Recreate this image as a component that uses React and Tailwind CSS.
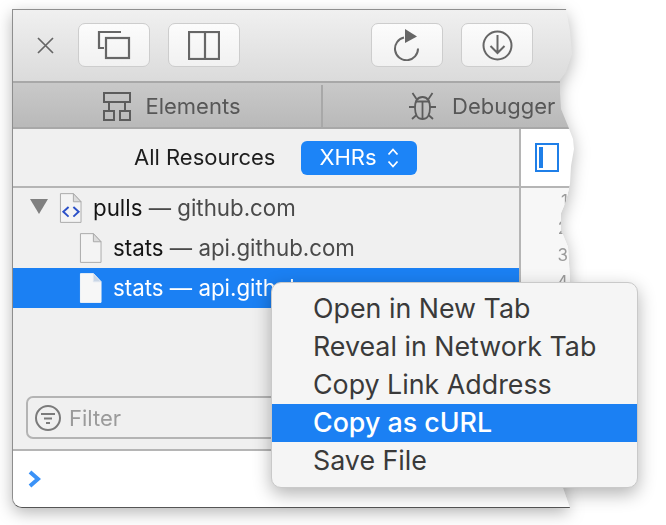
import React from "react";

const sans = "font-['Inter','Liberation_Sans',sans-serif]";

function ToolButton({ children, className = "" }) {
  return (
    <div className={`flex h-[44px] w-[72px] items-center justify-center rounded-[7px] border border-[#cdcdcd] bg-gradient-to-b from-[#fcfcfc] to-[#f1f1f1] ${className}`}>
      {children}
    </div>
  );
}

function FileIcon({ code = false, light = false, className = "" }) {
  return (
    <svg width="23" height="30" viewBox="0 0 24 31" className={className}>
      <path
        d="M1.5 .5H15L23 9V30.5H1.5Z"
        fill={light ? "#f7f7f7" : "#f4f4f4"}
        stroke={light ? "#f7f7f7" : "#a8a8a8"}
      />
      <path d="M15 .5V9H23Z" fill={light ? "#c9d6e6" : "#dcdcdc"} stroke={light ? "#dfe6ef" : "#a8a8a8"} />
      {code && (
        <g fill="none" stroke="#2b50c8" strokeWidth="2">
          <path d="M10 14.5L4.5 19.5L10 24.5" />
          <path d="M15 14.5L20.5 19.5L15 24.5" />
        </g>
      )}
    </svg>
  );
}

function TreeRow({ name, host, indent, selected = false, children }) {
  return (
    <div className={`flex h-10 items-center ${indent} ${selected ? "bg-[#1b80f3] text-white" : "text-[#141414]"}`}>
      {children}
      <span className="ml-[11px] whitespace-nowrap text-[22.3px]">
        {name}{" "}
        <span className={selected ? "text-white" : "text-[#4a4a4a]"}>— {host}</span>
      </span>
    </div>
  );
}

const menuItems = ["Open in New Tab", "Reveal in Network Tab", "Copy Link Address", "Copy as cURL", "Save File"];

export default function App() {
  return (
    <div className={`relative h-[525px] w-[666px] overflow-hidden bg-white pl-3 pt-[9px] ${sans}`}>
      {/* sombra fica fora do clip-path */}
      <div className="w-[563px] drop-shadow-[0_5px_8px_rgba(0,0,0,0.28)]">
        <div className="flex h-[499px] w-[563px] flex-col overflow-hidden rounded-bl-[10px] border-l border-t border-b border-[#8e8e8e] border-b-[#555] [clip-path:polygon(0_0,554px_0,558px_22px,560px_45px,554px_63px,548px_71px,548px_84px,549px_100px,556px_117px,561px_130px,562px_140px,559px_157px,558px_175px,554px_192px,549px_204px,549px_221px,556px_238px,558px_271px,556px_400px,551px_479px,558px_499px,0_499px)]">
          {/* toolbar */}
          <div className="flex h-[73px] shrink-0 items-center border-b-2 border-[#a8a8a8] bg-gradient-to-b from-[#f0f0f0] to-[#dbdbdb] pb-[1px] pl-[24px]">
            <svg width="17" height="17" viewBox="0 0 17 17" fill="none" stroke="#666" strokeWidth="1.7" className="mr-[24px]">
              <path d="M1 1L16 16M16 1L1 16" />
            </svg>
            <ToolButton>
              <svg width="34" height="30" viewBox="0 0 34 30" fill="none" stroke="#666" strokeWidth="2.2">
                <path d="M24 2H2V18H7" />
                <rect x="9" y="8" width="23" height="20" />
              </svg>
            </ToolButton>
            <ToolButton className="ml-[18px]">
              <svg width="32" height="29" viewBox="0 0 32 29" fill="none" stroke="#666" strokeWidth="2.2">
                <rect x="1" y="1" width="30" height="27" />
                <path d="M17 1V28" />
              </svg>
            </ToolButton>
            <ToolButton className="ml-[131px]">
              <svg width="28" height="32" viewBox="0 0 28 32" fill="none" className="-translate-x-[1px]">
                <path d="M12 8.5A11.5 11.5 0 1 0 26 19.5" stroke="#666" strokeWidth="2" />
                <path d="M13 0L25 7.5L13 14Z" fill="#666" />
              </svg>
            </ToolButton>
            <ToolButton className="ml-[18px]">
              <svg width="31" height="31" viewBox="0 0 31 31" fill="none" stroke="#666" strokeWidth="2">
                <circle cx="15.5" cy="15.5" r="14" />
                <path d="M15.5 5V23M8.5 16L15.5 23L22.5 16" />
              </svg>
            </ToolButton>
          </div>

          {/* tabs */}
          <div className="flex h-[46px] shrink-0 border-b-2 border-[#a8a8a8] bg-gradient-to-b from-[#c9c9c9] to-[#b9b9b9] pt-[2px] text-[22px] text-[#575757]">
            <div className="flex w-[310px] items-center justify-center gap-[14px] border-r-2 border-[#a8a8a8] pl-[10px]">
              <svg width="28" height="29" viewBox="0 0 28 29" fill="none" stroke="#5c5c5c" strokeWidth="2">
                <rect x="1" y="1" width="26" height="9" />
                <rect x="1" y="19" width="10" height="9" />
                <rect x="17" y="19" width="10" height="9" />
                <path d="M6 10V19M22 10V19" />
              </svg>
              <span>Elements</span>
            </div>
            <div className="flex items-center gap-[15px] pl-[85px]">
              <svg width="29" height="30" viewBox="0 0 29 30" fill="none" stroke="#5c5c5c" strokeWidth="1.8">
                <path d="M14.5 6C9 6 7 11 7 17C7 24 10 28 14.5 28C19 28 22 24 22 17C22 11 20 6 14.5 6Z" />
                <path d="M7.5 10.5H21.5M14.5 10.5V28" />
                <path d="M8.5 8L4.5 2M20.5 8L24.5 2M7 16H1M22 16H28M8.5 24L4 28M20.5 24L25 28" />
              </svg>
              <span className="whitespace-nowrap">Debugger</span>
            </div>
          </div>

          {/* content */}
          <div className="flex min-h-0 flex-1">
            <div className="flex w-[508px] shrink-0 flex-col border-r-2 border-[#b5b5b5] bg-[#f0f0f0]">
              <div className="flex h-[59px] shrink-0 items-center border-b-2 border-[#b5b5b5] pl-[121px]">
                <span className="w-[167px] text-[22px] text-[#1e1e1e]">All Resources</span>
                <div className="flex h-[34px] w-[116px] items-center justify-center gap-[10px] rounded-[6px] bg-[#1c84f7] text-[22px] text-white">
                  <span>XHRs</span>
                  <svg width="12" height="22" viewBox="0 0 12 22" fill="none" stroke="#fff" strokeWidth="1.8">
                    <path d="M1.5 7.5L6 2.5L10.5 7.5M1.5 14.5L6 19.5L10.5 14.5" />
                  </svg>
                </div>
              </div>

              <TreeRow name="pulls" host="github.com" indent="pl-[17px]">
                <svg width="18" height="15" viewBox="0 0 18 15" className="mr-[11px] mt-[-4px]">
                  <path d="M0 0H18L9 15Z" fill="#808080" />
                </svg>
                <FileIcon code />
              </TreeRow>
              <TreeRow name="stats" host="api.github.com" indent="pl-[66px]">
                <FileIcon />
              </TreeRow>
              <TreeRow name="stats" host="api.github.com" indent="pl-[66px]" selected>
                <FileIcon light />
              </TreeRow>

              <div className="flex flex-1 items-end px-[13px] pb-[10px]">
                <div className="flex h-[43px] w-[320px] items-center gap-[8px] rounded-[7px] border-2 border-[#b4b4b4] pl-[7px] text-[22px] text-[#9b9b9b]">
                  <svg width="26" height="26" viewBox="0 0 26 26" fill="none" stroke="#7b7b7b" strokeWidth="2">
                    <circle cx="13" cy="13" r="12" />
                    <path d="M6 9H20M9 13.5H17M11 18H15" />
                  </svg>
                  <span className="pt-[1px]">Filter</span>
                </div>
              </div>
            </div>

            <div className="flex-1 bg-white">
              <div className="flex h-[59px] items-center border-b-2 border-[#b5b5b5] pl-[14px]">
                <div className="h-[29px] w-[24px] border-2 border-[#1f7fe8] bg-white py-[2px] pl-[2px]">
                  <div className="h-full w-[4px] bg-[#1f7fe8]" />
                </div>
              </div>
              <div className="h-full bg-[#f7f7f7] text-right">
                {[1, 2, 3, 4].map((n) => (
                  <div key={n} className="w-[47px] text-[17px] leading-[27px] text-[#9a9a9a]">{n}</div>
                ))}
              </div>
            </div>
          </div>

          {/* console */}
          <div className="flex h-[58px] shrink-0 items-center border-t-2 border-[#b5b5b5] bg-white pl-[15px]">
            <svg width="13" height="18" viewBox="0 0 13 18" fill="none" stroke="#3b92f7" strokeWidth="4">
              <path d="M2 2L10 9L2 16" />
            </svg>
          </div>
        </div>
      </div>

      {/* context menu */}
      <div className="absolute left-[271px] top-[282px] w-[367px] rounded-[10px] border border-[#c9c9c9] bg-[#f5f5f5] py-[7px] text-[#3a3a3a] shadow-[0_6px_18px_rgba(0,0,0,0.3)]">
        {menuItems.map((item) => (
          <div
            key={item}
            className={`h-[38px] pl-[41px] text-[26.8px] leading-[36px] ${item === "Copy as cURL" ? "bg-[#1b80f3] font-medium text-white" : ""}`}
          >
            {item}
          </div>
        ))}
      </div>
    </div>
  );
}
